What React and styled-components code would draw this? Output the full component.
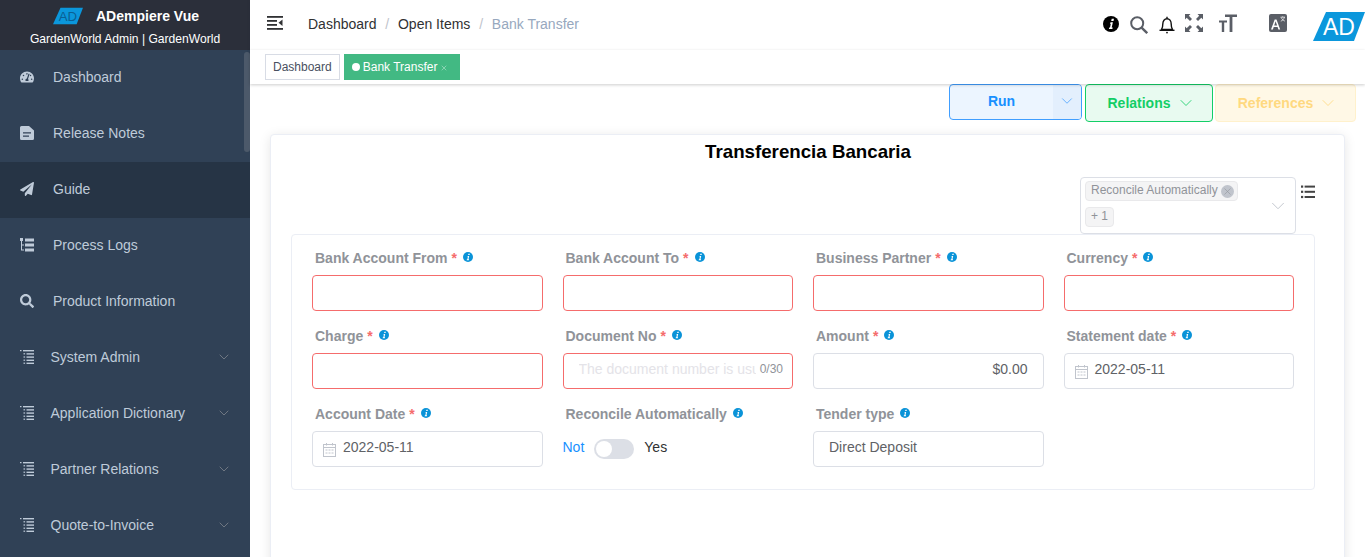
import styled, { createGlobalStyle } from "styled-components";
import { FaTachometerAlt, FaPaperPlane, FaSearch } from "react-icons/fa";
import { ChevronDown, X } from "lucide-react";

const GlobalStyle = createGlobalStyle`
  html, body {
    margin: 0;
    padding: 0;
    height: 100%;
    overflow: hidden;
    font-family: "Liberation Sans", Arial, sans-serif;
    background: #fff;
  }
  * { box-sizing: border-box; }
`;

const menu = [
  { label: "Dashboard", icon: "dash" },
  { label: "Release Notes", icon: "file" },
  { label: "Guide", icon: "plane", active: true },
  { label: "Process Logs", icon: "logs" },
  { label: "Product Information", icon: "search" },
  { label: "System Admin", icon: "tree", sub: true },
  { label: "Application Dictionary", icon: "tree", sub: true },
  { label: "Partner Relations", icon: "tree", sub: true },
  { label: "Quote-to-Invoice", icon: "tree", sub: true },
];

const fields = [
  { label: "Bank Account From", req: true, error: true },
  { label: "Bank Account To", req: true, error: true },
  { label: "Business Partner", req: true, error: true },
  { label: "Currency", req: true, error: true },
  { label: "Charge", req: true, error: true },
  { label: "Document No", req: true, error: true, placeholder: "The document number is usually", count: "0/30" },
  { label: "Amount", req: true, value: "$0.00", right: true },
  { label: "Statement date", req: true, value: "2022-05-11", date: true },
  { label: "Account Date", req: true, value: "2022-05-11", date: true },
  { label: "Reconcile Automatically", toggle: true },
  { label: "Tender type", value: "Direct Deposit", plain: true },
];

const FileIcon = () => (
  <svg width="14" height="14" viewBox="0 0 14 14" fill="currentColor" fillRule="evenodd">
    <path d="M1.5 0H9l5 4.6V12.5a1.5 1.5 0 0 1-1.5 1.5h-11A1.5 1.5 0 0 1 0 12.5v-11A1.5 1.5 0 0 1 1.5 0zM3 6.2v1.3h8V6.2zM3 9.4v1.3h6V9.4z" />
  </svg>
);

const LogsIcon = () => (
  <svg width="14" height="14" viewBox="0 0 14 14" fill="currentColor">
    <rect x="0" y="0" width="3" height="3" />
    <rect x="5" y="0.5" width="9" height="3" />
    <rect x="5" y="5.5" width="9" height="3" />
    <rect x="5" y="10.5" width="9" height="3" />
    <path d="M1 3v9.5h3v-1H2V7.5h2v-1H2V3z" />
  </svg>
);

const TreeIcon = () => (
  <svg width="14" height="14" viewBox="0 0 14 14" fill="currentColor">
    <rect x="0" y="0" width="1.5" height="1.2" />
    <rect x="3" y="0" width="11" height="1.4" />
    <rect x="3.5" y="3.2" width="1.6" height="1.2" />
    <rect x="6.5" y="3.2" width="7.5" height="1.4" />
    <rect x="3.5" y="6.4" width="1.6" height="1.2" />
    <rect x="6.5" y="6.4" width="7.5" height="1.4" />
    <rect x="3.5" y="9.6" width="1.6" height="1.2" />
    <rect x="6.5" y="9.6" width="7.5" height="1.4" />
    <rect x="3.5" y="12.6" width="1.6" height="1.2" />
    <rect x="6.5" y="12.6" width="7.5" height="1.4" />
  </svg>
);

const menuIcons = {
  dash: <FaTachometerAlt size={14} />,
  file: <FileIcon />,
  plane: <FaPaperPlane size={14} />,
  logs: <LogsIcon />,
  search: <FaSearch size={14} />,
  tree: <TreeIcon />,
};

const AdLogo = ({ width, height, text }) => (
  <svg width={width} height={height} viewBox="0 0 52 29">
    <polygon points="13,0 52,0 41,29 0,29" fill="#0b97dc" />
    <text x="26" y="23" textAnchor="middle" fontSize="23" fontFamily="Liberation Sans, sans-serif" fill={text}>
      AD
    </text>
  </svg>
);

const InfoGlyph = ({ size, color }) => (
  <svg width={size} height={size} viewBox="0 0 16 16">
    <circle cx="8" cy="8" r="8" fill={color} />
    <path
      d="M8.7 2.8h2.3l-.5 2.1H8.2zM7.6 6.3h2.3l-1.2 5.3h1l-.3 1.5H5.9l.3-1.5h.8l.8-3.9h-.9z"
      fill="#fff"
    />
  </svg>
);

const HamburgerIcon = () => (
  <svg width="16" height="14" viewBox="0 0 16 14" fill="#303133">
    <rect x="0" y="0" width="16" height="1.8" />
    <rect x="0" y="4" width="10" height="1.8" />
    <rect x="0" y="8" width="10" height="1.8" />
    <rect x="0" y="12" width="16" height="1.8" />
    <path d="M15.5 3.5v6.5L11.5 6.8z" />
  </svg>
);

const SearchIcon = () => (
  <svg width="18" height="18" viewBox="0 0 18 18" fill="none" stroke="#5a5e66" strokeWidth="2">
    <circle cx="7.2" cy="7.2" r="6" />
    <path d="M11.6 11.6 17.2 17.2" strokeWidth="2.4" />
  </svg>
);

const BellIcon = () => (
  <svg width="16" height="18" viewBox="0 0 16 18" fill="none" stroke="#111" strokeWidth="1.4">
    <path d="M2.5 13.5c1-1.5 1.3-3 1.3-5.5 0-3 1.7-5.3 4.2-5.3s4.2 2.3 4.2 5.3c0 2.5.3 4 1.3 5.5z" strokeLinejoin="round" />
    <path d="M0.5 14.3h15" />
    <path d="M8 .8v1.8" />
    <circle cx="8" cy="16.6" r="0.9" fill="#111" stroke="none" />
  </svg>
);

const FullscreenIcon = () => (
  <svg width="18" height="18" viewBox="0 0 18 18" fill="#5a5e66">
    <path d="M0 0h5.5L3.8 1.7 7 5 5 7 1.7 3.8 0 5.5z" />
    <path d="M18 0v5.5l-1.7-1.7L13 7l-2-2 3.2-3.3L12.5 0z" />
    <path d="M0 18v-5.5l1.7 1.7L5 11l2 2-3.2 3.3L5.5 18z" />
    <path d="M18 18h-5.5l1.7-1.7L11 13l2-2 3.3 3.2 1.7-1.7z" />
  </svg>
);

const TextSizeIcon = () => (
  <svg width="18" height="18" viewBox="0 0 18 18" fill="#5a5e66">
    <path d="M6 0.5h12v2.4h-4.6V18h-2.8V2.9H6z" />
    <path d="M0 6.5h8v2H5.2V18H2.8V8.5H0z" />
  </svg>
);

const TranslateIcon = () => (
  <svg width="18" height="18" viewBox="0 0 18 18">
    <rect width="18" height="18" rx="2" fill="#5a5e66" />
    <path d="M2 15.5 5.7 5.5h1.8l3.7 10H9.4l-.8-2.4H4.7l-.8 2.4zM5.2 11.6h2.9L6.6 7.3z" fill="#fff" />
    <path d="M11.5 3.2h4.5M13.7 2.4v.8M15.4 3.2c-.5 2-1.8 3.3-3.6 4M12.3 3.6c.6 1.6 1.9 2.9 3.6 3.5" stroke="#fff" strokeWidth=".7" fill="none" />
  </svg>
);

const CalendarIcon = () => (
  <svg width="13" height="14" viewBox="0 0 13 14" fill="none" stroke="#c0c4cc" strokeWidth="1">
    <rect x="0.5" y="1.5" width="12" height="12" />
    <path d="M0.5 4.5h12M3.5 0v2.5M9.5 0v2.5" />
    <path d="M2.5 7h2M5.5 7h2M8.5 7h2M2.5 10h2M5.5 10h2M8.5 10h2" />
  </svg>
);

const ListIcon = () => (
  <svg width="14" height="14" viewBox="0 0 14 14" fill="#444">
    <rect x="0" y="0.5" width="2.2" height="2.2" />
    <rect x="3.6" y="0.6" width="10.4" height="2" />
    <rect x="0" y="5.7" width="2.2" height="2.2" />
    <rect x="3.6" y="5.8" width="10.4" height="2" />
    <rect x="0" y="10.9" width="2.2" height="2.2" />
    <rect x="3.6" y="11" width="10.4" height="2" />
  </svg>
);

const App = () => {
  return (
    <Layout>
      <GlobalStyle />
      <Sidebar>
        <Brand>
          <BrandTop>
            <AdLogo width={30} height={18} text="#0a5f94" />
            <BrandName>ADempiere Vue</BrandName>
          </BrandTop>
          <BrandSub>GardenWorld Admin | GardenWorld</BrandSub>
        </Brand>
        <Menu>
          {menu.map((item) => (
            <MenuItem key={item.label} $active={item.active} $sub={item.sub}>
              <MenuIcon $sub={item.sub}>{menuIcons[item.icon]}</MenuIcon>
              <MenuLabel>{item.label}</MenuLabel>
              {item.sub && (
                <MenuArrow>
                  <ChevronDown size={16} strokeWidth={1} />
                </MenuArrow>
              )}
            </MenuItem>
          ))}
          <Scrollbar />
        </Menu>
      </Sidebar>
      <Main>
        <Navbar>
          <Hamburger>
            <HamburgerIcon />
          </Hamburger>
          <Breadcrumb>
            <Crumb>Dashboard</Crumb>
            <CrumbSep>/</CrumbSep>
            <Crumb>Open Items</Crumb>
            <CrumbSep>/</CrumbSep>
            <Crumb $last>Bank Transfer</Crumb>
          </Breadcrumb>
          <RightMenu>
            <InfoSlot>
              <InfoGlyph size={16} color="#000" />
            </InfoSlot>
            <SearchSlot>
              <SearchIcon />
            </SearchSlot>
            <BellSlot>
              <BellIcon />
            </BellSlot>
            <FullSlot>
              <FullscreenIcon />
            </FullSlot>
            <TextSlot>
              <TextSizeIcon />
            </TextSlot>
            <LangSlot>
              <TranslateIcon />
            </LangSlot>
            <LogoSlot>
              <AdLogo width={52} height={29} text="#fff" />
            </LogoSlot>
          </RightMenu>
        </Navbar>
        <TagsBar>
          <Tag>Dashboard</Tag>
          <Tag $active>
            <TagDot />
            Bank Transfer
            <TagClose>
              <X size={8} strokeWidth={1.5} />
            </TagClose>
          </Tag>
        </TagsBar>
        <Content>
          <Actions>
            <RunGroup>
              <RunLabel>Run</RunLabel>
              <RunCaret>
                <ChevronDown size={18} strokeWidth={1} />
              </RunCaret>
            </RunGroup>
            <ActionButton $tone="green" $w={128}>
              Relations
              <ChevronDown size={20} strokeWidth={1} />
            </ActionButton>
            <ActionButton $tone="yellow" $w={141}>
              References
              <ChevronDown size={20} strokeWidth={1} />
            </ActionButton>
          </Actions>
          <Card>
            <Title>Transferencia Bancaria</Title>
            <FilterRow>
              <FilterSelect>
                <Chips>
                  <Chip>
                    Reconcile Automatically
                    <ChipClose>
                      <X size={11} strokeWidth={1.25} />
                    </ChipClose>
                  </Chip>
                  <Chip>+ 1</Chip>
                </Chips>
                <FilterArrow>
                  <ChevronDown size={22} strokeWidth={1} />
                </FilterArrow>
              </FilterSelect>
              <ListSlot>
                <ListIcon />
              </ListSlot>
            </FilterRow>
            <FormPanel>
              {fields.map((f) => (
                <Field key={f.label}>
                  <FieldLabel>
                    {f.label}
                    {f.req && <Required>*</Required>}
                    <FieldInfo>
                      <InfoGlyph size={10} color="#0a93d8" />
                    </FieldInfo>
                  </FieldLabel>
                  {f.toggle ? (
                    <ToggleRow>
                      <ToggleText $on>Not</ToggleText>
                      <Toggle>
                        <Knob />
                      </Toggle>
                      <ToggleText>Yes</ToggleText>
                    </ToggleRow>
                  ) : (
                    <InputBox $error={f.error} $right={f.right} $plain={f.plain}>
                      {f.date && (
                        <DateIcon>
                          <CalendarIcon />
                        </DateIcon>
                      )}
                      {f.placeholder && <Placeholder>{f.placeholder}</Placeholder>}
                      {f.value && <span>{f.value}</span>}
                      {f.count && <Count>{f.count}</Count>}
                    </InputBox>
                  )}
                </Field>
              ))}
            </FormPanel>
          </Card>
        </Content>
      </Main>
    </Layout>
  );
};

const Layout = styled.div`
  display: flex;
  width: 1365px;
  height: 557px;
  overflow: hidden;
`;

const Sidebar = styled.aside`
  width: 250px;
  flex: none;
  background: #304156;
  display: flex;
  flex-direction: column;
`;

const Brand = styled.div`
  height: 50px;
  background: #2b2f3a;
  color: #fff;
  text-align: center;
  flex: none;
`;

const BrandTop = styled.div`
  height: 31px;
  padding-top: 7px;
  padding-left: 53px;
  display: flex;
  align-items: flex-start;
  gap: 13px;
`;

const BrandName = styled.span`
  font-size: 14px;
  font-weight: 700;
  line-height: 18px;
`;

const BrandSub = styled.div`
  font-size: 12.1px;
  line-height: 16px;
`;

const Menu = styled.div`
  position: relative;
  flex: 1;
  overflow: hidden;
`;

const MenuItem = styled.div`
  height: 56px;
  display: flex;
  align-items: center;
  padding: 0 18px 2px 20px;
  color: #bfcbd9;
  font-size: 14px;
  background: ${({ $active }) => ($active ? "#263445" : "transparent")};
`;

const MenuIcon = styled.span`
  width: 14px;
  display: flex;
  margin-right: ${({ $sub }) => ($sub ? "16.5px" : "19px")};
`;

const MenuLabel = styled.span`
  flex: 1;
`;

const MenuArrow = styled.span`
  display: flex;
  color: #909399;
`;

const Scrollbar = styled.div`
  position: absolute;
  top: 2px;
  right: 0;
  width: 6px;
  height: 100px;
  border-radius: 4px;
  background: rgba(144, 147, 153, 0.3);
`;

const Main = styled.main`
  flex: 1;
  min-width: 0;
  display: flex;
  flex-direction: column;
`;

const Navbar = styled.header`
  height: 50px;
  flex: none;
  display: flex;
  align-items: center;
  background: #fff;
  padding-left: 17px;
  box-shadow: 0 1px 4px rgba(0, 21, 41, 0.08);
`;

const Hamburger = styled.div`
  display: flex;
  margin-right: 25px;
  margin-top: -4px;
`;

const Breadcrumb = styled.nav`
  display: flex;
  align-items: center;
  font-size: 14px;
  margin-top: -3px;
`;

const Crumb = styled.span`
  color: ${({ $last }) => ($last ? "#97a8be" : "#303133")};
`;

const CrumbSep = styled.span`
  color: #c0c4cc;
  margin: 0 8.8px;
`;

const RightMenu = styled.div`
  margin-left: auto;
  display: flex;
  align-items: center;
  margin-top: -1px;
`;

const InfoSlot = styled.span`
  display: flex;
  transform: translateY(-1px);
`;

const SearchSlot = styled.span`
  display: flex;
  margin-left: 11px;
`;

const BellSlot = styled.span`
  display: flex;
  margin-left: 11px;
`;

const FullSlot = styled.span`
  display: flex;
  margin-left: 10px;
  transform: translateY(-2px);
`;

const TextSlot = styled.span`
  display: flex;
  margin-left: 16px;
  transform: translateY(-2px);
`;

const LangSlot = styled.span`
  display: flex;
  margin-left: 32px;
  transform: translateY(-2px);
`;

const LogoSlot = styled.span`
  display: flex;
  margin-left: 26px;
  margin-top: 4px;
`;

const TagsBar = styled.div`
  height: 34px;
  flex: none;
  display: flex;
  align-items: flex-start;
  gap: 4px;
  padding: 4px 0 0 15px;
  background: #fff;
  box-shadow: 0 1px 3px rgba(0, 0, 0, 0.2);
  position: relative;
`;

const Tag = styled.div`
  height: 26px;
  display: flex;
  align-items: center;
  padding: 0 7px;
  font-size: 12px;
  border: 1px solid ${({ $active }) => ($active ? "#42b983" : "#d8dce5")};
  background: ${({ $active }) => ($active ? "#42b983" : "#fff")};
  color: ${({ $active }) => ($active ? "#fff" : "#495060")};
`;

const TagDot = styled.span`
  width: 8px;
  height: 8px;
  border-radius: 50%;
  background: #fff;
  margin-right: 3px;
`;

const TagClose = styled.span`
  display: flex;
  color: rgba(255, 255, 255, 0.75);
  margin: 2px 4px 0 3px;
`;

const Content = styled.div`
  flex: 1;
  min-height: 0;
  background: #fff;
  padding: 0 9px 0 20px;
`;

const Actions = styled.div`
  display: flex;
  justify-content: flex-end;
  align-items: flex-start;
  gap: 3px;
  margin-bottom: 12px;
`;

const RunGroup = styled.div`
  width: 133px;
  height: 36px;
  display: flex;
  border: 1px solid #409eff;
  border-radius: 4px;
  background: #ecf5ff;
`;

const RunLabel = styled.div`
  flex: 1;
  color: #1890ff;
  font-weight: 700;
  font-size: 14px;
  display: flex;
  align-items: center;
  justify-content: center;
  padding-bottom: 3px;
`;

const RunCaret = styled.div`
  width: 28px;
  background: #e3effd;
  color: #409eff;
  display: flex;
  align-items: center;
  justify-content: center;
  padding-bottom: 2px;
  border-radius: 0 3px 3px 0;
`;

const tones = {
  green: { bg: "#e8faf0", border: "#13ce66", color: "#13ce66" },
  yellow: { bg: "#fff8e6", border: "#fff1cc", color: "#ffd980" },
};

const ActionButton = styled.div`
  width: ${({ $w }) => $w}px;
  height: 38px;
  display: flex;
  align-items: center;
  justify-content: center;
  gap: 10px;
  font-size: 14px;
  font-weight: 700;
  border-radius: 4px;
  background: ${({ $tone }) => tones[$tone].bg};
  border: 1px solid ${({ $tone }) => tones[$tone].border};
  color: ${({ $tone }) => tones[$tone].color};
  margin-left: ${({ $tone }) => ($tone === "yellow" ? "-1px" : "0")};

  svg {
    margin: 0 -5px;
  }
`;

const Card = styled.section`
  width: 1075px;
  height: 500px;
  border: 1px solid #ebeef5;
  border-radius: 4px;
  box-shadow: 0 2px 12px rgba(0, 0, 0, 0.1);
  background: #fff;
  padding: 0 29px 0 20px;
`;

const Title = styled.h2`
  margin: 0;
  height: 42px;
  padding: 6px 0 0 10px;
  text-align: center;
  font-size: 18.72px;
  line-height: 22px;
  font-weight: 700;
  color: #000;
`;

const FilterRow = styled.div`
  display: flex;
  justify-content: flex-end;
  align-items: flex-start;
`;

const FilterSelect = styled.div`
  width: 216px;
  height: 57px;
  display: flex;
  border: 1px solid #dcdfe6;
  border-radius: 4px;
  background: #fff;
  position: relative;
  margin-right: 5px;
`;

const Chips = styled.div`
  display: flex;
  flex-direction: column;
  align-items: flex-start;
  gap: 6px;
  padding: 3px 0 0 4px;
`;

const Chip = styled.span`
  height: 20px;
  display: flex;
  align-items: center;
  padding: 0 5px 2px;
  background: #f4f4f5;
  border: 1px solid #e9e9eb;
  border-radius: 4px;
  color: #909399;
  font-size: 12px;
  white-space: nowrap;
`;

const ChipClose = styled.span`
  width: 13px;
  height: 13px;
  border-radius: 50%;
  background: #c0c4cc;
  color: #909399;
  display: flex;
  align-items: center;
  justify-content: center;
  margin: 2px -2px 0 3px;
`;

const FilterArrow = styled.span`
  position: absolute;
  right: 6px;
  top: 17px;
  display: flex;
  color: #c0c4cc;
`;

const ListSlot = styled.span`
  display: flex;
  margin-top: 8px;
`;

const FormPanel = styled.div`
  width: 1024px;
  height: 256px;
  border: 1px solid #ebeef5;
  border-radius: 4px;
  padding: 10px 10px 0;
  display: grid;
  grid-template-columns: repeat(4, 1fr);
  grid-auto-rows: 78px;
  align-content: start;
`;

const Field = styled.div`
  padding: 0 10px;
`;

const FieldLabel = styled.div`
  height: 30px;
  padding: 5px 0 0 3px;
  display: flex;
  align-items: flex-start;
  font-size: 14px;
  line-height: 17px;
  font-weight: 700;
  color: #909399;
  white-space: nowrap;
`;

const Required = styled.span`
  color: #f56c6c;
  margin-left: 4px;
`;

const FieldInfo = styled.span`
  display: flex;
  margin: 2px 0 0 6px;
`;

const InputBox = styled.div`
  height: 36px;
  display: flex;
  align-items: center;
  justify-content: ${({ $right }) => ($right ? "flex-end" : "flex-start")};
  padding: 0 15px 5px ${({ $plain }) => ($plain ? "15px" : "10px")};
  border: 1px solid ${({ $error }) => ($error ? "#f56c6c" : "#dcdfe6")};
  border-radius: 4px;
  background: #fff;
  color: #606266;
  font-size: 14px;
  position: relative;
  overflow: hidden;
`;

const DateIcon = styled.span`
  display: flex;
  margin-right: 7px;
  margin-top: 6px;
`;

const Placeholder = styled.span`
  color: #e4e3e8;
  white-space: nowrap;
  overflow: hidden;
  width: 177px;
  margin-left: 5px;
  flex: none;
`;

const Count = styled.span`
  position: absolute;
  right: 9px;
  top: 8px;
  color: #909399;
  font-size: 12px;
`;

const ToggleRow = styled.div`
  height: 36px;
  display: flex;
  align-items: center;
  font-size: 14px;
  padding-bottom: 4px;
`;

const ToggleText = styled.span`
  color: ${({ $on }) => ($on ? "#1890ff" : "#303133")};
`;

const Toggle = styled.span`
  width: 40px;
  height: 20px;
  border-radius: 10px;
  background: #dcdfe6;
  margin: 4px 10px 0;
  position: relative;
  display: block;
`;

const Knob = styled.span`
  position: absolute;
  top: 2px;
  left: 2px;
  width: 16px;
  height: 16px;
  border-radius: 50%;
  background: #fff;
`;

export default App;
